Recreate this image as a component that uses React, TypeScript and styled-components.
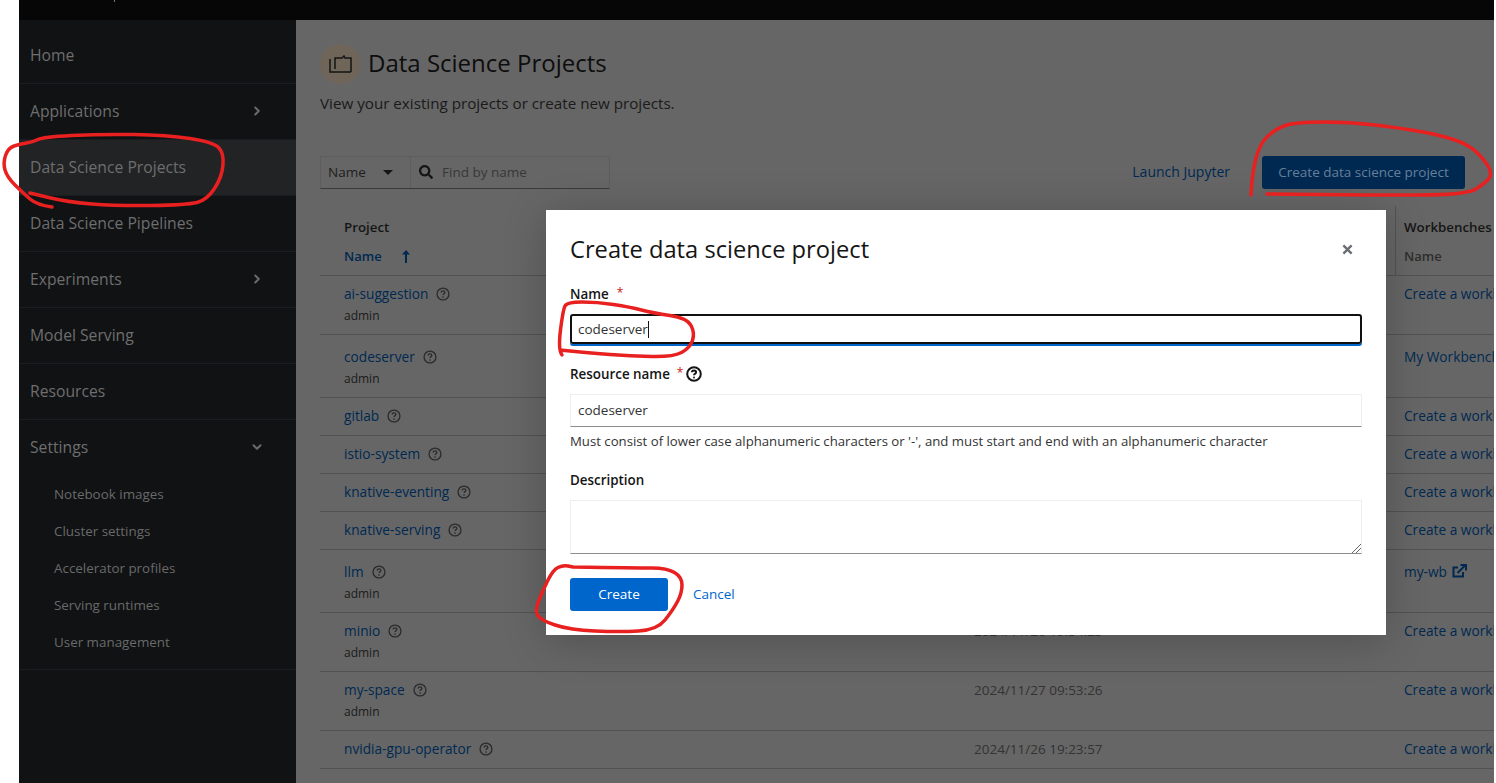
import styled, {createGlobalStyle} from 'styled-components'
import {ChevronRight, ChevronDown} from 'lucide-react'

const GlobalStyle = createGlobalStyle`
  html, body {
    margin: 0;
    padding: 0;
    background: #fff;
    height: 100%;
    overflow: hidden;
  }
  * {
    box-sizing: border-box;
  }
  body {
    font-family: 'Open Sans', 'Liberation Sans', sans-serif;
  }
`

const navItems = [
  {label: 'Home'},
  {label: 'Applications', arrow: 'right'},
  {label: 'Data Science Projects', active: true},
  {label: 'Data Science Pipelines'},
  {label: 'Experiments', arrow: 'right'},
  {label: 'Model Serving'},
  {label: 'Resources'},
  {label: 'Settings', arrow: 'down', open: true},
]

const subItems = ['Notebook images', 'Cluster settings', 'Accelerator profiles', 'Serving runtimes', 'User management']

const projects = [
  {name: 'ai-suggestion', owner: 'admin', height: 59, pad: 8, date: '', wb: 'Create a workbench'},
  {name: 'codeserver', owner: 'admin', height: 63, pad: 12, date: '', wb: 'My Workbench'},
  {name: 'gitlab', height: 38, pad: 8, date: '', wb: 'Create a workbench'},
  {name: 'istio-system', height: 38, pad: 8, date: '', wb: 'Create a workbench'},
  {name: 'knative-eventing', height: 38, pad: 8, date: '', wb: 'Create a workbench'},
  {name: 'knative-serving', height: 38, pad: 8, date: '', wb: 'Create a workbench'},
  {name: 'llm', owner: 'admin', height: 63, pad: 12, date: '', wb: 'my-wb', external: true},
  {name: 'minio', owner: 'admin', height: 59, pad: 8, date: '2024/11/26 19:54:23', wb: 'Create a workbench'},
  {name: 'my-space', owner: 'admin', height: 59, pad: 8, date: '2024/11/27 09:53:26', wb: 'Create a workbench'},
  {name: 'nvidia-gpu-operator', height: 38, pad: 8, date: '2024/11/26 19:23:57', wb: 'Create a workbench'},
]

// hand drawn red marks, points read off the reference
const marks: number[][][] = [
  [[52, 207], [37, 205], [23, 193], [7, 177], [3, 163], [8, 148], [20, 144], [33, 142], [43, 137], [100, 134], [167, 135], [213, 142], [224, 153], [222, 177], [207, 200], [187, 205], [117, 206], [67, 202], [30, 193]],
  [[1251, 195], [1252, 173], [1260, 143], [1277, 128], [1297, 122], [1350, 122], [1400, 128], [1440, 135], [1470, 145], [1487, 163], [1492, 175], [1485, 183], [1467, 195], [1367, 195], [1267, 194]],
  [[562, 355], [558, 350], [563, 310], [567, 302], [597, 302], [630, 307], [653, 313], [687, 318], [695, 333], [690, 348], [673, 357], [630, 356], [590, 353], [560, 350]],
  [[573, 567], [637, 568], [667, 568], [682, 577], [682, 593], [673, 610], [657, 630], [620, 632], [570, 630], [540, 620], [535, 610], [543, 590], [553, 570], [563, 565], [573, 567]],
]

const smoothPath = (pts: number[][]) => {
  let d = `M${pts[0][0]} ${pts[0][1]}`
  for (let i = 1; i < pts.length - 1; i++) {
    const mx = (pts[i][0] + pts[i + 1][0]) / 2
    const my = (pts[i][1] + pts[i + 1][1]) / 2
    d += `Q${pts[i][0]} ${pts[i][1]} ${mx} ${my}`
  }
  const last = pts[pts.length - 1]
  return `${d}L${last[0]} ${last[1]}`
}

const HelpIcon = ({size = 14, color = '#2b2b2b', weight = 1.5}: {size?: number; color?: string; weight?: number}) => (
  <svg width={size} height={size} viewBox='0 0 16 16' fill='none'>
    <circle cx='8' cy='8' r='6.8' stroke={color} strokeWidth={weight} />
    <path d='M5.9 6.3c0-1.2 1-1.9 2.1-1.9s2.1.7 2.1 1.8c0 1.5-2.1 1.5-2.1 3' stroke={color} strokeWidth={weight} fill='none' />
    <circle cx='8' cy='11.5' r='.95' fill={color} />
  </svg>
)

const App = () => {
  return (
    <Page>
      <GlobalStyle />
      <TopBar>
        <TopBarMark />
      </TopBar>
      <Body>
        <Sidebar>
          {navItems.map(item => (
            <NavItem key={item.label} $active={item.active} $open={item.open}>
              <span>{item.label}</span>
              {item.arrow === 'right' && <ChevronRight size={14} strokeWidth={3.5} />}
              {item.arrow === 'down' && <ChevronDown size={14} strokeWidth={3.5} />}
            </NavItem>
          ))}
          <SubNav>
            {subItems.map(label => (
              <SubItem key={label}>{label}</SubItem>
            ))}
          </SubNav>
        </Sidebar>
        <Main>
          <TitleRow>
            <TitleBadge>
              <svg width='23' height='18' viewBox='0 0 23 18' fill='none' stroke='#151515' strokeWidth='1.5'>
                <path d='M1 4v13h21' />
                <path d='M6 14V3h7l2-2 1 2h6v14' />
              </svg>
            </TitleBadge>
            <Title>Data Science Projects</Title>
          </TitleRow>
          <Subtitle>View your existing projects or create new projects.</Subtitle>
          <Toolbar>
            <FilterGroup>
              <FilterSelect>
                Name
                <Caret />
              </FilterSelect>
              <FilterSearch>
                <svg width='14' height='14' viewBox='0 0 512 512' fill='#151515'>
                  <path d='M505 442.7L405.3 343c-4.5-4.5-10.6-7-17-7H372c27.6-35.3 44-79.7 44-128C416 93.1 322.9 0 208 0S0 93.1 0 208s93.1 208 208 208c48.3 0 92.7-16.4 128-44v16.3c0 6.4 2.5 12.5 7 17l99.7 99.7c9.4 9.4 24.6 9.4 33.9 0l28.3-28.3c9.4-9.4 9.4-24.6.1-34zM208 336c-70.7 0-128-57.2-128-128 0-70.7 57.2-128 128-128 70.7 0 128 57.2 128 128 0 70.7-57.2 128-128 128z' />
                </svg>
                <span>Find by name</span>
              </FilterSearch>
            </FilterGroup>
            <ToolbarActions>
              <LaunchLink>Launch Jupyter</LaunchLink>
              <PrimaryDim>Create data science project</PrimaryDim>
            </ToolbarActions>
          </Toolbar>
          <Table>
            <HeaderRow>
              <ProjectHead>
                <GroupLabel>Project</GroupLabel>
                <SortLabel>
                  Name
                  <svg width='8' height='13' viewBox='0 0 8 13' fill='#002952'>
                    <path d='M4 0L8 4.5H5V13H3V4.5H0z' />
                  </svg>
                </SortLabel>
              </ProjectHead>
              <WorkbenchHead>
                <GroupLabel>Workbenches</GroupLabel>
                <ColLabel>Name</ColLabel>
              </WorkbenchHead>
            </HeaderRow>
            {projects.map(p => (
              <Row key={p.name} $height={p.height}>
                <ProjectCell $pad={p.pad}>
                  <ProjectName>
                    <RowLink>{p.name}</RowLink>
                    <HelpIcon size={14} />
                  </ProjectName>
                  {p.owner && <Owner>{p.owner}</Owner>}
                </ProjectCell>
                <DateCell $pad={p.pad}>{p.date}</DateCell>
                <WorkbenchCell $pad={p.pad}>
                  <RowLink>{p.wb}</RowLink>
                  {p.external && (
                    <ExternalIcon viewBox='0 0 15 14'>
                      <path d='M11 8v4.5H1.5V3.5H6' />
                      <path d='M5.5 9L13 1.5M8.5 1h5.5v5.5' />
                    </ExternalIcon>
                  )}
                </WorkbenchCell>
              </Row>
            ))}
          </Table>
        </Main>
      </Body>

      <Modal>
        <ModalHeader>
          <ModalTitle>Create data science project</ModalTitle>
          <CloseIcon viewBox='0 0 12 12'>
            <path d='M1.5 1.5l9 9M10.5 1.5l-9 9' stroke='#6a6e73' strokeWidth='2.6' />
          </CloseIcon>
        </ModalHeader>
        <Field $mb={20}>
          <FieldLabel>
            Name<Req>*</Req>
          </FieldLabel>
          <FocusedInput>
            codeserver
            <Cursor />
          </FocusedInput>
        </Field>
        <Field $mb={20}>
          <FieldLabel>
            Resource name<ReqTight>*</ReqTight>
            <HelpIcon size={16} color='#151515' weight={2} />
          </FieldLabel>
          <TextInput>codeserver</TextInput>
          <HelperText>Must consist of lower case alphanumeric characters or '-', and must start and end with an alphanumeric character</HelperText>
        </Field>
        <Field $mb={24}>
          <FieldLabel>Description</FieldLabel>
          <TextArea>
            <Grip viewBox='0 0 10 10'>
              <path d='M1 10L10 1M5 10l5-5' stroke='#666' strokeWidth='1' />
            </Grip>
          </TextArea>
        </Field>
        <ModalActions>
          <CreateButton>Create</CreateButton>
          <CancelLink>Cancel</CancelLink>
        </ModalActions>
      </Modal>

      <Annotations viewBox='0 0 1496 783'>
        {marks.map((pts, i) => (
          <path key={i} d={smoothPath(pts)} />
        ))}
      </Annotations>
    </Page>
  )
}

export default App

const Page = styled.div`
  position: relative;
  width: 1496px;
  height: 783px;
  padding-left: 19px;
  padding-right: 2px;
  display: flex;
  flex-direction: column;
  overflow: hidden;
  background: #fff;
  color: #151515;
`

const TopBar = styled.div`
  height: 20px;
  flex-shrink: 0;
  background: #060606;
  padding-left: 95px;
`

const TopBarMark = styled.div`
  width: 1px;
  height: 2px;
  background: #777;
`

const Body = styled.div`
  flex: 1;
  display: flex;
  min-height: 0;
`

const Sidebar = styled.nav`
  width: 277px;
  flex-shrink: 0;
  background: #101214;
  padding-top: 8px;
`

const NavItem = styled.div<{$active?: boolean; $open?: boolean}>`
  height: 56px;
  padding: 0 32px 2px 11px;
  display: flex;
  align-items: center;
  justify-content: space-between;
  font-size: 15.7px;
  color: #6e6e6e;
  border-bottom: 1px solid ${p => (p.$open ? 'transparent' : '#1a1d20')};
  background: ${p => (p.$active ? '#212325' : 'transparent')};
  & svg {
    color: #6a6a6a;
  }
`

const SubNav = styled.div`
  padding: 0 0 8px 35px;
  border-bottom: 1px solid #1a1d20;
`

const SubItem = styled.div`
  height: 37px;
  padding-bottom: 2px;
  display: flex;
  align-items: center;
  font-size: 13.4px;
  color: #6a6a6a;
`

const Main = styled.main`
  flex: 1;
  min-width: 0;
  background: #666;
  padding: 24px 0 0 24px;
  overflow: hidden;
`

const TitleRow = styled.div`
  display: flex;
  align-items: center;
  gap: 8px;
`

const TitleBadge = styled.div`
  width: 40px;
  height: 40px;
  border-radius: 50%;
  background: #6f6558;
  display: flex;
  align-items: center;
  justify-content: center;
`

const Title = styled.h1`
  margin: 0;
  padding-bottom: 4px;
  font-size: 24px;
  font-weight: 400;
  color: #0d0d0d;
`

const Subtitle = styled.p`
  margin: 9px 0 0;
  font-size: 15.2px;
  line-height: 20px;
  color: #1a1a1a;
`

const Toolbar = styled.div`
  margin-top: 43px;
  height: 33px;
  display: flex;
  justify-content: space-between;
  align-items: center;
  padding-right: 29px;
`

const FilterGroup = styled.div`
  width: 290px;
  height: 33px;
  display: flex;
  border: 1px solid #5d5d5d;
  border-bottom-color: #3a3a3a;
  font-size: 13.5px;
`

const FilterSelect = styled.div`
  width: 90px;
  display: flex;
  align-items: center;
  justify-content: space-between;
  padding: 0 17px 2px 7px;
  border-right: 1px solid #5d5d5d;
  color: #1d1d1d;
`

const Caret = styled.span`
  width: 0;
  height: 0;
  margin-top: 2px;
  border-left: 5px solid transparent;
  border-right: 5px solid transparent;
  border-top: 5px solid #151515;
`

const FilterSearch = styled.div`
  flex: 1;
  display: flex;
  align-items: center;
  gap: 9px;
  padding: 0 0 2px 8px;
  color: #383838;
`

const ToolbarActions = styled.div`
  display: flex;
  align-items: center;
  gap: 32px;
`

const LaunchLink = styled.a`
  padding-bottom: 2px;
  font-size: 14px;
  color: #002952;
`

const PrimaryDim = styled.div`
  width: 203px;
  height: 33px;
  padding-bottom: 2px;
  border-radius: 3px;
  background: #002952;
  color: #667f99;
  font-size: 13.5px;
  display: flex;
  align-items: center;
  justify-content: center;
`

const Table = styled.div`
  margin-top: 17px;
  width: 1174px;
`

const HeaderRow = styled.div`
  height: 70px;
  display: flex;
  justify-content: space-between;
  border-bottom: 1px solid #525252;
`

const ProjectHead = styled.div`
  padding: 12px 0 0 24px;
`

const WorkbenchHead = styled.div`
  width: 99px;
  flex-shrink: 0;
  padding: 12px 0 0 8px;
  border-left: 1px solid #525252;
  overflow: hidden;
  white-space: nowrap;
`

const GroupLabel = styled.div`
  font-size: 13.3px;
  font-weight: 600;
  color: #151515;
  height: 29px;
`

const SortLabel = styled.div`
  display: flex;
  align-items: center;
  gap: 20px;
  font-size: 13px;
  font-weight: 600;
  color: #002952;
`

const ColLabel = styled.div`
  font-size: 13px;
  font-weight: 600;
  color: #2e2e2e;
`

const Row = styled.div<{$height: number}>`
  height: ${p => p.$height}px;
  display: flex;
  border-bottom: 1px solid #525252;
`

const ProjectCell = styled.div<{$pad: number}>`
  width: 654px;
  flex-shrink: 0;
  padding: ${p => p.$pad}px 0 0 24px;
`

const ProjectName = styled.div`
  display: flex;
  align-items: center;
  gap: 8px;
`

const RowLink = styled.a`
  font-size: 13.7px;
  color: #002952;
  white-space: nowrap;
`

const Owner = styled.div`
  margin-top: 4px;
  font-size: 12px;
  color: #1b1b1b;
`

const DateCell = styled.div<{$pad: number}>`
  flex: 1;
  padding-top: ${p => p.$pad + 1}px;
  font-size: 13.5px;
  color: #333;
`

const WorkbenchCell = styled.div<{$pad: number}>`
  width: 99px;
  flex-shrink: 0;
  padding: ${p => p.$pad}px 0 0 9px;
  display: flex;
  align-items: flex-start;
  gap: 5px;
  overflow: hidden;
  white-space: nowrap;
`

const ExternalIcon = styled.svg`
  width: 15px;
  height: 14px;
  margin-top: 2px;
  flex-shrink: 0;
  fill: none;
  stroke: #002952;
  stroke-width: 2;
`

const Modal = styled.div`
  position: absolute;
  left: 546px;
  top: 210px;
  width: 840px;
  height: 425px;
  background: #fff;
  padding: 24px;
  box-shadow: 0 6px 40px rgba(0, 0, 0, 0.22);
`

const ModalHeader = styled.div`
  display: flex;
  align-items: center;
  justify-content: space-between;
  height: 30px;
  margin-bottom: 20px;
  padding-right: 9px;
`

const ModalTitle = styled.h2`
  margin: 0;
  font-size: 23.7px;
  font-weight: 400;
  color: #151515;
`

const CloseIcon = styled.svg`
  width: 11px;
  height: 11px;
`

const Field = styled.div<{$mb: number}>`
  margin-bottom: ${p => p.$mb}px;
`

const FieldLabel = styled.div`
  display: flex;
  align-items: center;
  height: 19px;
  font-size: 13.4px;
  font-weight: 600;
  color: #151515;
  margin-bottom: 11px;
`

const Req = styled.span`
  color: #c9190b;
  font-size: 12px;
  font-weight: 400;
  margin: 0 0 3px 8px;
`

const ReqTight = styled(Req)`
  margin-left: 7px;
  margin-right: 3px;
`

const FocusedInput = styled.div`
  height: 30px;
  display: flex;
  align-items: center;
  padding-left: 6px;
  font-size: 13.5px;
  color: #333;
  border: 2px solid #111;
  border-radius: 3px;
  box-shadow: 0 2px 0 0 #06c;
`

const Cursor = styled.span`
  width: 1px;
  height: 17px;
  background: #151515;
`

const TextInput = styled.div`
  height: 33px;
  display: flex;
  align-items: center;
  padding: 0 0 2px 7px;
  font-size: 13.5px;
  color: #333;
  border: 1px solid #eee;
  border-bottom-color: #8a8d90;
`

const HelperText = styled.div`
  margin-top: 5px;
  font-size: 13.2px;
  line-height: 18px;
  color: #333;
`

const TextArea = styled.div`
  position: relative;
  height: 54px;
  border: 1px solid #eee;
  border-bottom-color: #8a8d90;
`

const Grip = styled.svg`
  position: absolute;
  right: 0;
  bottom: 0;
  width: 10px;
  height: 10px;
`

const ModalActions = styled.div`
  display: flex;
  align-items: center;
  gap: 25px;
`

const CreateButton = styled.button`
  width: 98px;
  height: 33px;
  padding: 0 0 2px;
  border: none;
  border-radius: 3px;
  background: #06c;
  color: #fff;
  font: inherit;
  font-size: 13.5px;
`

const CancelLink = styled.a`
  padding-bottom: 2px;
  font-size: 13.5px;
  color: #06c;
`

const Annotations = styled.svg`
  position: absolute;
  left: 0;
  top: 0;
  width: 1496px;
  height: 783px;
  pointer-events: none;
  fill: none;
  stroke: #e82020;
  stroke-width: 3.5;
  stroke-linecap: round;
  stroke-linejoin: round;
`
